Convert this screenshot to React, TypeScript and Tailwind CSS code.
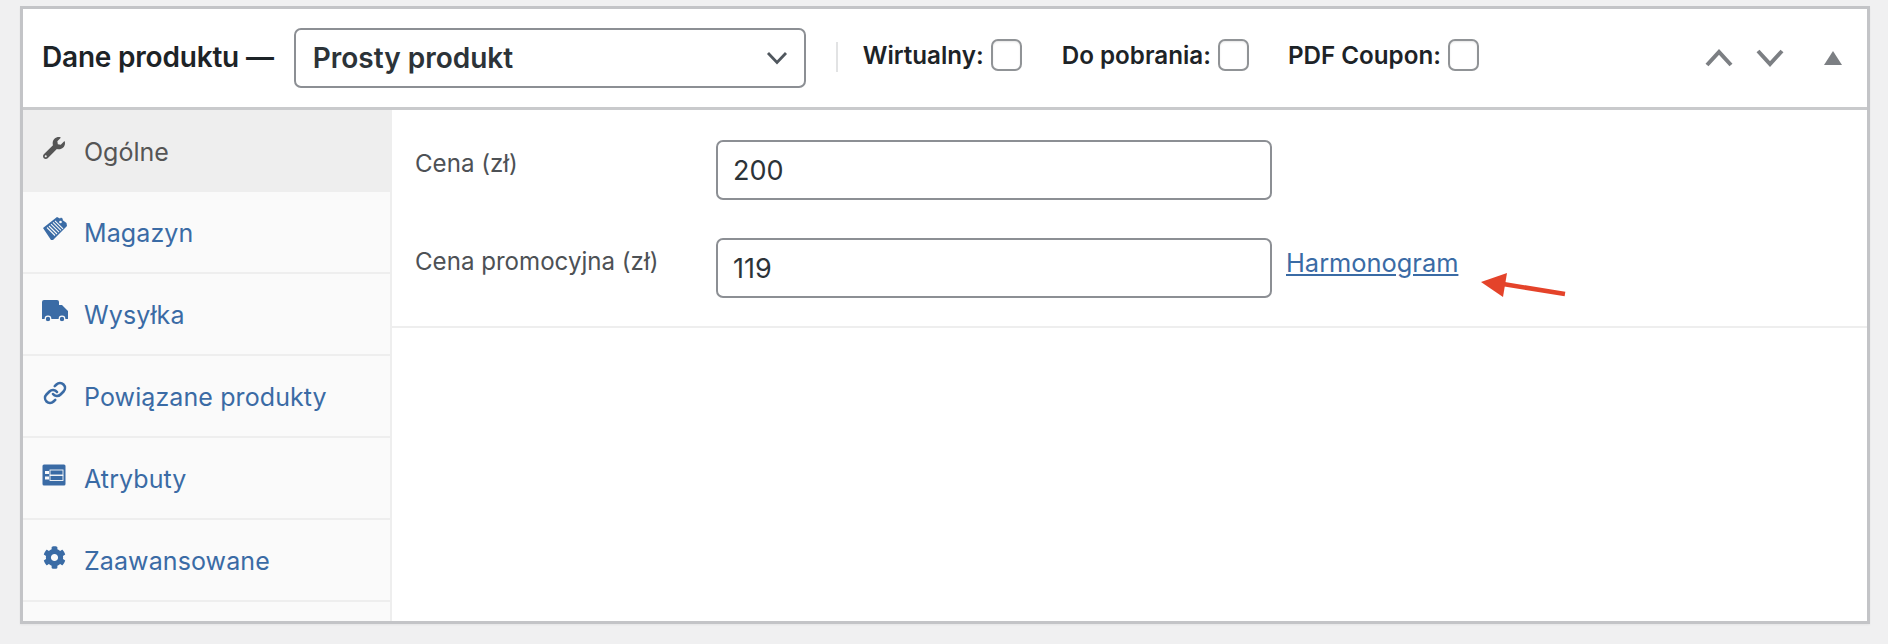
import React from "react";
import { FaWrench, FaCog } from "react-icons/fa";
import { Link as LinkIcon } from "lucide-react";

const font = { fontFamily: "Inter, 'Liberation Sans', sans-serif" };

function Stock() {
  return (
    <svg viewBox="0 0 26 26" className="w-[26px] h-[26px]">
      <path d="M1 12 L15 1 L18 2.5 L19 1.5 L21 3 L20.5 4 L24.5 7 L25 10 L11 24 L9 24 Z" fill="#3a6ba5" />
      <g stroke="#fafafa" strokeWidth="1.1">
        <path d="M5 11.5 L13 19.5" />
        <path d="M7 10 L15 18" />
        <path d="M9 8.2 L17 16.2" />
        <path d="M11 6.4 L19 14.4" />
        <path d="M13 4.8 L21 12.8" />
      </g>
      <circle cx="18.5" cy="6" r="1.3" fill="#fafafa" />
    </svg>
  );
}

function Truck() {
  return (
    <svg viewBox="0 0 26 22" className="w-[26px] h-[22px]">
      <path d="M0 2 Q0 0 2 0 L15 0 Q17 0 17 2 L17 5 L20 5 L26 11 L26 19 L0 19 Z" fill="#3a6ba5" />
      <circle cx="6" cy="19" r="2.8" fill="#3a6ba5" stroke="#fafafa" strokeWidth="1.2" />
      <circle cx="20" cy="19" r="2.8" fill="#3a6ba5" stroke="#fafafa" strokeWidth="1.2" />
    </svg>
  );
}

function TableIcon() {
  return (
    <svg viewBox="0 0 24 22" className="w-[24px] h-[22px]">
      <rect x="0.5" y="0.5" width="23" height="21" rx="1.5" fill="#3a6ba5" />
      <rect x="3" y="7" width="4" height="3" fill="#fafafa" />
      <rect x="3" y="12.5" width="4" height="3" fill="#fafafa" />
      <rect x="8" y="6" width="13" height="5" fill="none" stroke="#fafafa" strokeWidth="0.9" />
      <rect x="8" y="11.5" width="13" height="5" fill="none" stroke="#fafafa" strokeWidth="0.9" />
    </svg>
  );
}

function CheckItem({ label, className }: { label: string; className?: string }) {
  return (
    <label className={`flex items-center gap-[7px] -mt-[4px] ${className ?? ""}`}>
      <span className="text-[24.2px] font-semibold text-[#1d2327] leading-none">{label}</span>
      <span className="block w-[31px] h-[32px] rounded-[7px] border-2 border-[#909396] bg-white shadow-[inset_0_1px_2px_rgba(0,0,0,0.1)] -mt-[3px]" />
    </label>
  );
}

const tabs = [
  { label: "Magazyn", icon: <Stock /> },
  { label: "Wysyłka", icon: <Truck /> },
  { label: "Powiązane produkty", icon: <LinkIcon size={24} strokeWidth={2.6} color="#3a6ba5" className="ml-[1px]" /> },
  { label: "Atrybuty", icon: <TableIcon /> },
  { label: "Zaawansowane", icon: <FaCog className="text-[#3a6ba5] w-[23px] h-[23px] ml-[1px]" /> },
];

function Field({ label, value, children }: { label: string; value: string; children?: React.ReactNode }) {
  return (
    <div className="flex items-start">
      <div className="w-[324px] pt-[9px] pl-[23px] text-[24.1px] leading-[30px] text-[#4d5155] whitespace-nowrap">{label}</div>
      <div className="w-[556px] h-[60px] shrink-0 rounded-[7px] border-2 border-[#8c8f94] bg-white flex items-center pl-[15px] pt-[2px] text-[27px] text-[#2c3338]">
        {value}
      </div>
      {children}
    </div>
  );
}

export default function App() {
  return (
    <div style={font} className="w-[1888px] h-[644px] bg-[#f0f0f1] pl-[20px] pt-[6px]">
      <div className="w-[1850px] h-[618px] border-[3px] border-[#c3c4c7] bg-white flex flex-col shadow-[0_1px_2px_rgba(0,0,0,0.05)]">
        <div className="h-[101px] shrink-0 border-b-[3px] border-[#c9cacc] flex items-center">
          <h2 className="ml-[19px] -mt-[3px] text-[28px] font-semibold text-[#1d2327] whitespace-nowrap leading-none tracking-[-0.2px]">Dane produktu —</h2>
          <div className="ml-[20px] w-[512px] h-[60px] rounded-[7px] border-2 border-[#8c8f94] flex items-center justify-between pl-[17px] pr-[16px] text-[28px] font-semibold text-[#2c3338]">
            <span>Prosty produkt</span>
            <svg viewBox="0 0 22 14" className="w-[22px] h-[14px]">
              <path d="M2 2 L11 11.5 L20 2" fill="none" stroke="#50575e" strokeWidth="2.8" />
            </svg>
          </div>
          <div className="ml-[30px] w-[2px] h-[30px] bg-[#e2e3e4] -mt-[3px]" />
          <CheckItem label="Wirtualny:" className="ml-[25px]" />
          <CheckItem label="Do pobrania:" className="ml-[40px]" />
          <CheckItem label="PDF Coupon:" className="ml-[39px]" />
          <div className="ml-auto mr-[25px] flex items-center">
            <svg viewBox="0 0 28 20" className="w-[28px] h-[20px]">
              <path d="M2 17 L14 4 L26 17" fill="none" stroke="#7c7f83" strokeWidth="4" />
            </svg>
            <svg viewBox="0 0 28 20" className="w-[28px] h-[20px] ml-[23px]">
              <path d="M2 3 L14 16 L26 3" fill="none" stroke="#7c7f83" strokeWidth="4" />
            </svg>
            <svg viewBox="0 0 18 14" className="w-[18px] h-[14px] ml-[40px]">
              <path d="M9 0 L18 14 L0 14 Z" fill="#7c7f83" />
            </svg>
          </div>
        </div>
        <div className="flex-1 flex min-h-0">
          <div className="w-[369px] shrink-0 bg-[#fafafa] border-r-2 border-[#eeeeee] flex flex-col">
            <div className="h-[82px] bg-[#eeeeee] flex items-center pl-[19px] text-[#555555] text-[25px]">
              <span className="w-[42px] h-[24px] -mt-[6px] flex items-center"><FaWrench className="w-[22px] h-[22px] ml-[1px] text-[#555555]" /></span>
              <span className="mt-[3px]">Ogólne</span>
            </div>
            {tabs.map((t) => (
              <div key={t.label} className="h-[82px] border-b-2 border-[#eeeeee] flex items-center pl-[19px] text-[#3a6ba5] text-[25px]">
                <span className="w-[42px] -mt-[6px] flex items-center">{t.icon}</span>
                <span className="mt-[3px] tracking-[0.1px]">{t.label}</span>
              </div>
            ))}
          </div>
          <div className="flex-1">
            <div className="h-[218px] border-b-2 border-[#eeeeee] pt-[30px] flex flex-col gap-[38px]">
              <Field label="Cena (zł)" value="200" />
              <Field label="Cena promocyjna (zł)" value="119">
                <a className="relative ml-[14px] pt-[10px] text-[25.4px] leading-[30px] text-[#3a6ba5] underline whitespace-nowrap">
                  Harmonogram
                  <svg viewBox="0 0 90 24" className="absolute left-[195px] top-[35px] w-[90px] h-[24px]">
                    <path d="M84 21 L22 11" stroke="#e4432a" strokeWidth="4.5" fill="none" />
                    <path d="M0 9 L26 0 L22 24 Z" fill="#e4432a" />
                  </svg>
                </a>
              </Field>
            </div>
          </div>
        </div>
      </div>
    </div>
  );
}
